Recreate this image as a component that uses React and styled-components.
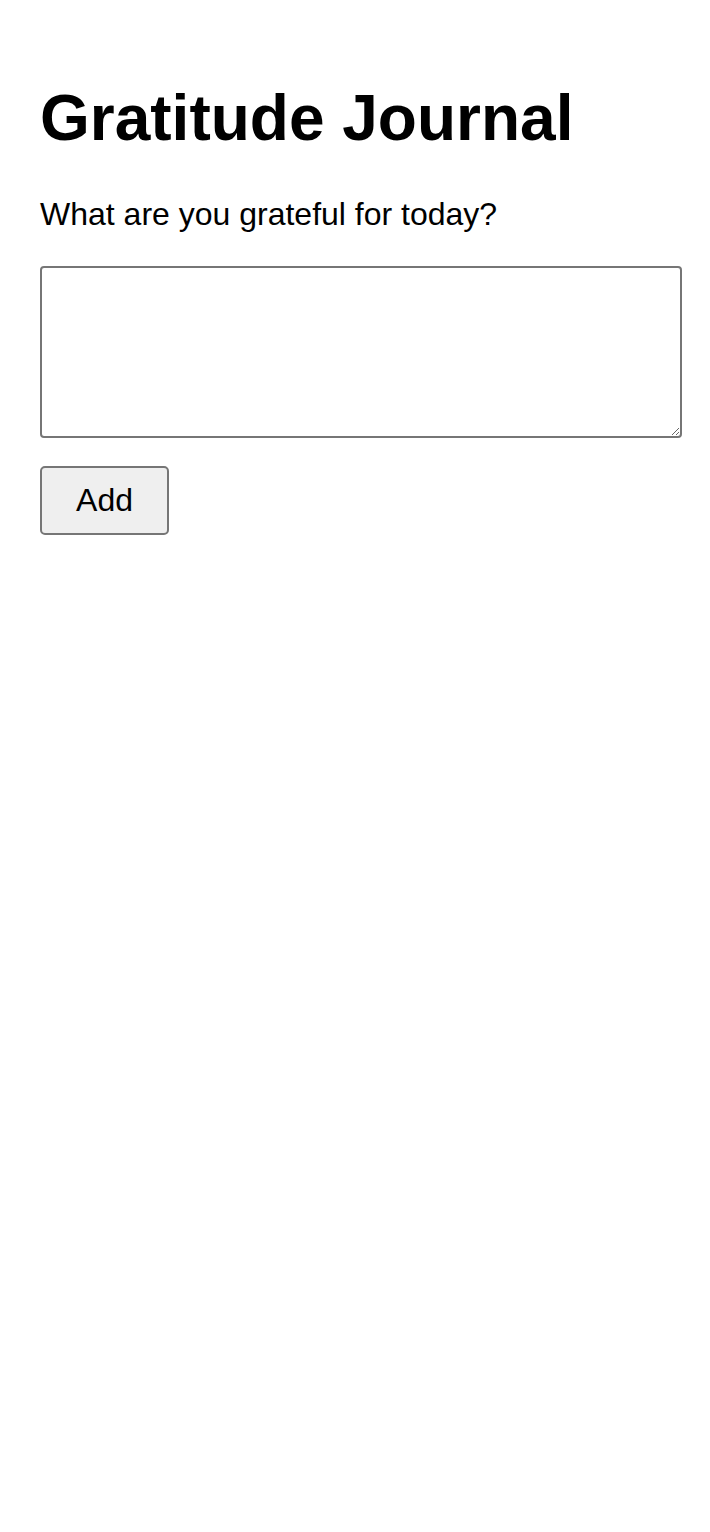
import React, { useState } from "react";
import styled, { createGlobalStyle } from "styled-components";

const GlobalStyle = createGlobalStyle`
  html, body {
    margin: 0;
    padding: 0;
    background: #ffffff;
  }
  body {
    font-family: "Liberation Sans", Arial, sans-serif;
    color: #000000;
  }
`;

const Page = styled.main`
  display: flex;
  flex-direction: column;
  align-items: flex-start;
  padding: 83px 28px 40px 40px;
`;

const Title = styled.h1`
  margin: 0;
  font-size: 64px;
  font-weight: 700;
  line-height: 1.117;
`;

const Prompt = styled.p`
  margin: 43px 0 0;
  font-size: 32px;
  line-height: 1.117;
`;

const Entry = styled.textarea`
  box-sizing: border-box;
  margin: 33px 0 0;
  width: 642px;
  height: 172px;
  padding: 4px;
  border: 2px solid #767676;
  border-radius: 4px;
  font-family: "Liberation Sans", Arial, sans-serif;
  font-size: 26px;
  background: #ffffff;
`;

const AddButton = styled.button`
  box-sizing: border-box;
  margin-top: 28px;
  width: 129px;
  height: 69px;
  border: 2px solid #767676;
  border-radius: 5px;
  background: #efefef;
  font-family: "Liberation Sans", Arial, sans-serif;
  font-size: 32px;
  color: #000000;
  cursor: pointer;
`;

export default function App() {
  const [text, setText] = useState("");
  return (
    <>
      <GlobalStyle />
      <Page>
        <Title>Gratitude Journal</Title>
        <Prompt>What are you grateful for today?</Prompt>
        <Entry value={text} onChange={(e) => setText(e.target.value)} />
        <AddButton type="button">Add</AddButton>
      </Page>
    </>
  );
}
